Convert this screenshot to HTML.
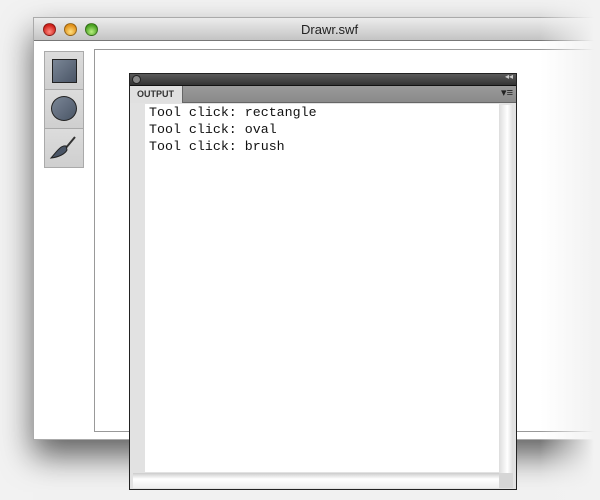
<!DOCTYPE html>
<html><head><style>
*{margin:0;padding:0;box-sizing:border-box}
body{width:600px;height:500px;background:#f2f2f2;position:relative;overflow:hidden;font-family:"Liberation Sans",sans-serif}
.win{position:absolute;left:33px;top:17px;width:600px;height:423px;background:#fff;border:1px solid #aaa;box-shadow:0 16px 30px rgba(0,0,0,.6)}
.tb{position:absolute;left:0;top:0;right:0;height:23px;background:linear-gradient(#ececec,#c4c4c4);border-bottom:1px solid #777;text-align:center;font-size:13px;line-height:23px;color:#222;padding-right:0}
.tb span{position:absolute;left:267px}
.btn{position:absolute;top:5px;width:13px;height:13px;border-radius:50%;border:1px solid rgba(0,0,0,.35)}
.canvas{position:absolute;left:60px;top:31px;width:560px;height:383px;border:1px solid #999;background:#fff}
.tools{position:absolute;left:10px;top:33px;width:40px;height:117px;border:1px solid #aaa;background:#d4d4d4}
.cell{height:38.3px;border-bottom:1px solid #aaa;background:linear-gradient(#dcdcdc,#cfcfcf);position:relative}
.fade{position:absolute;left:540px;top:0;width:60px;height:500px;background:linear-gradient(90deg,rgba(242,242,242,0),#f2f2f2 90%)}
.panel{position:absolute;left:129px;top:73px;width:388px;height:417px;background:#e2e2e2;border:1px solid #222}
.ph{height:12px;background:linear-gradient(#5a5a5a,#333);border-bottom:1px solid #111;position:relative}
.tabrow{height:17px;background:linear-gradient(#9a9a9a,#8a8a8a);border-bottom:1px solid #666;position:relative}
.tab{position:absolute;left:0;top:0;width:53px;height:17px;background:#e0e0e0;font-size:9px;font-weight:bold;color:#333;line-height:17px;padding-left:7px;border-right:1px solid #666}
.out{position:absolute;left:15px;top:31px;width:354px;height:368px;background:#fff;font-family:"Liberation Mono",monospace;font-size:13.3px;line-height:17px;padding:0 4px;margin-top:-1px;color:#111}
.vs{position:absolute;left:369px;top:31px;width:14px;height:368px;background:linear-gradient(90deg,#ddd,#fff 60%,#ddd)}
.hs{position:absolute;left:3px;top:399px;width:366px;height:15px;background:linear-gradient(#ccc,#fff 40%,#eee)}
.cor{position:absolute;left:369px;top:399px;width:14px;height:15px;background:#d6d6d6}
</style></head><body>
<div class="win">
 <div class="tb"><span>Drawr.swf</span>
  <div class="btn" style="left:9px;background:radial-gradient(circle at 50% 70%,#ff8a80,#d0201a 70%)"></div>
  <div class="btn" style="left:30px;background:radial-gradient(circle at 50% 70%,#ffe080,#e0901a 70%)"></div>
  <div class="btn" style="left:51px;background:radial-gradient(circle at 50% 70%,#b8f080,#48a020 70%)"></div>
 </div>
 <div class="canvas"></div>
 <div class="tools">
  <div class="cell"><div style="position:absolute;left:7px;top:7px;width:25px;height:24px;border:1px solid #222;background:linear-gradient(135deg,#7a8696,#4a5566)"></div></div>
  <div class="cell"><div style="position:absolute;left:6px;top:6px;width:26px;height:25px;border:1px solid #222;border-radius:50%;background:linear-gradient(135deg,#7a8696,#4a5566)"></div></div>
  <div class="cell" style="border-bottom:none"><svg width="38" height="38" style="position:absolute;left:0;top:0"><path d="M30 8 L20 20" stroke="#333" stroke-width="2"/><path d="M21 17 C16 16 12 22 6 29 C14 28 20 25 22 21 Z" fill="#4a5566" stroke="#222" stroke-width="1"/></svg></div>
 </div>
</div>
<div class="fade"></div>
<div class="panel">
 <div class="ph"><div style="position:absolute;left:2px;top:1px;width:9px;height:9px;border-radius:50%;background:#888;border:1px solid #222"></div><span style="position:absolute;right:3px;top:-2px;color:#ccc;font-size:8px">◂◂</span></div>
 <div class="tabrow"><div class="tab">OUTPUT</div><span style="position:absolute;right:3px;top:0;color:#222;font-size:11px">▾≡</span></div>
 <div class="out">Tool click: rectangle<br>Tool click: oval<br>Tool click: brush</div>
 <div class="vs"></div><div class="hs"></div><div class="cor"></div>
</div>
</body></html>
